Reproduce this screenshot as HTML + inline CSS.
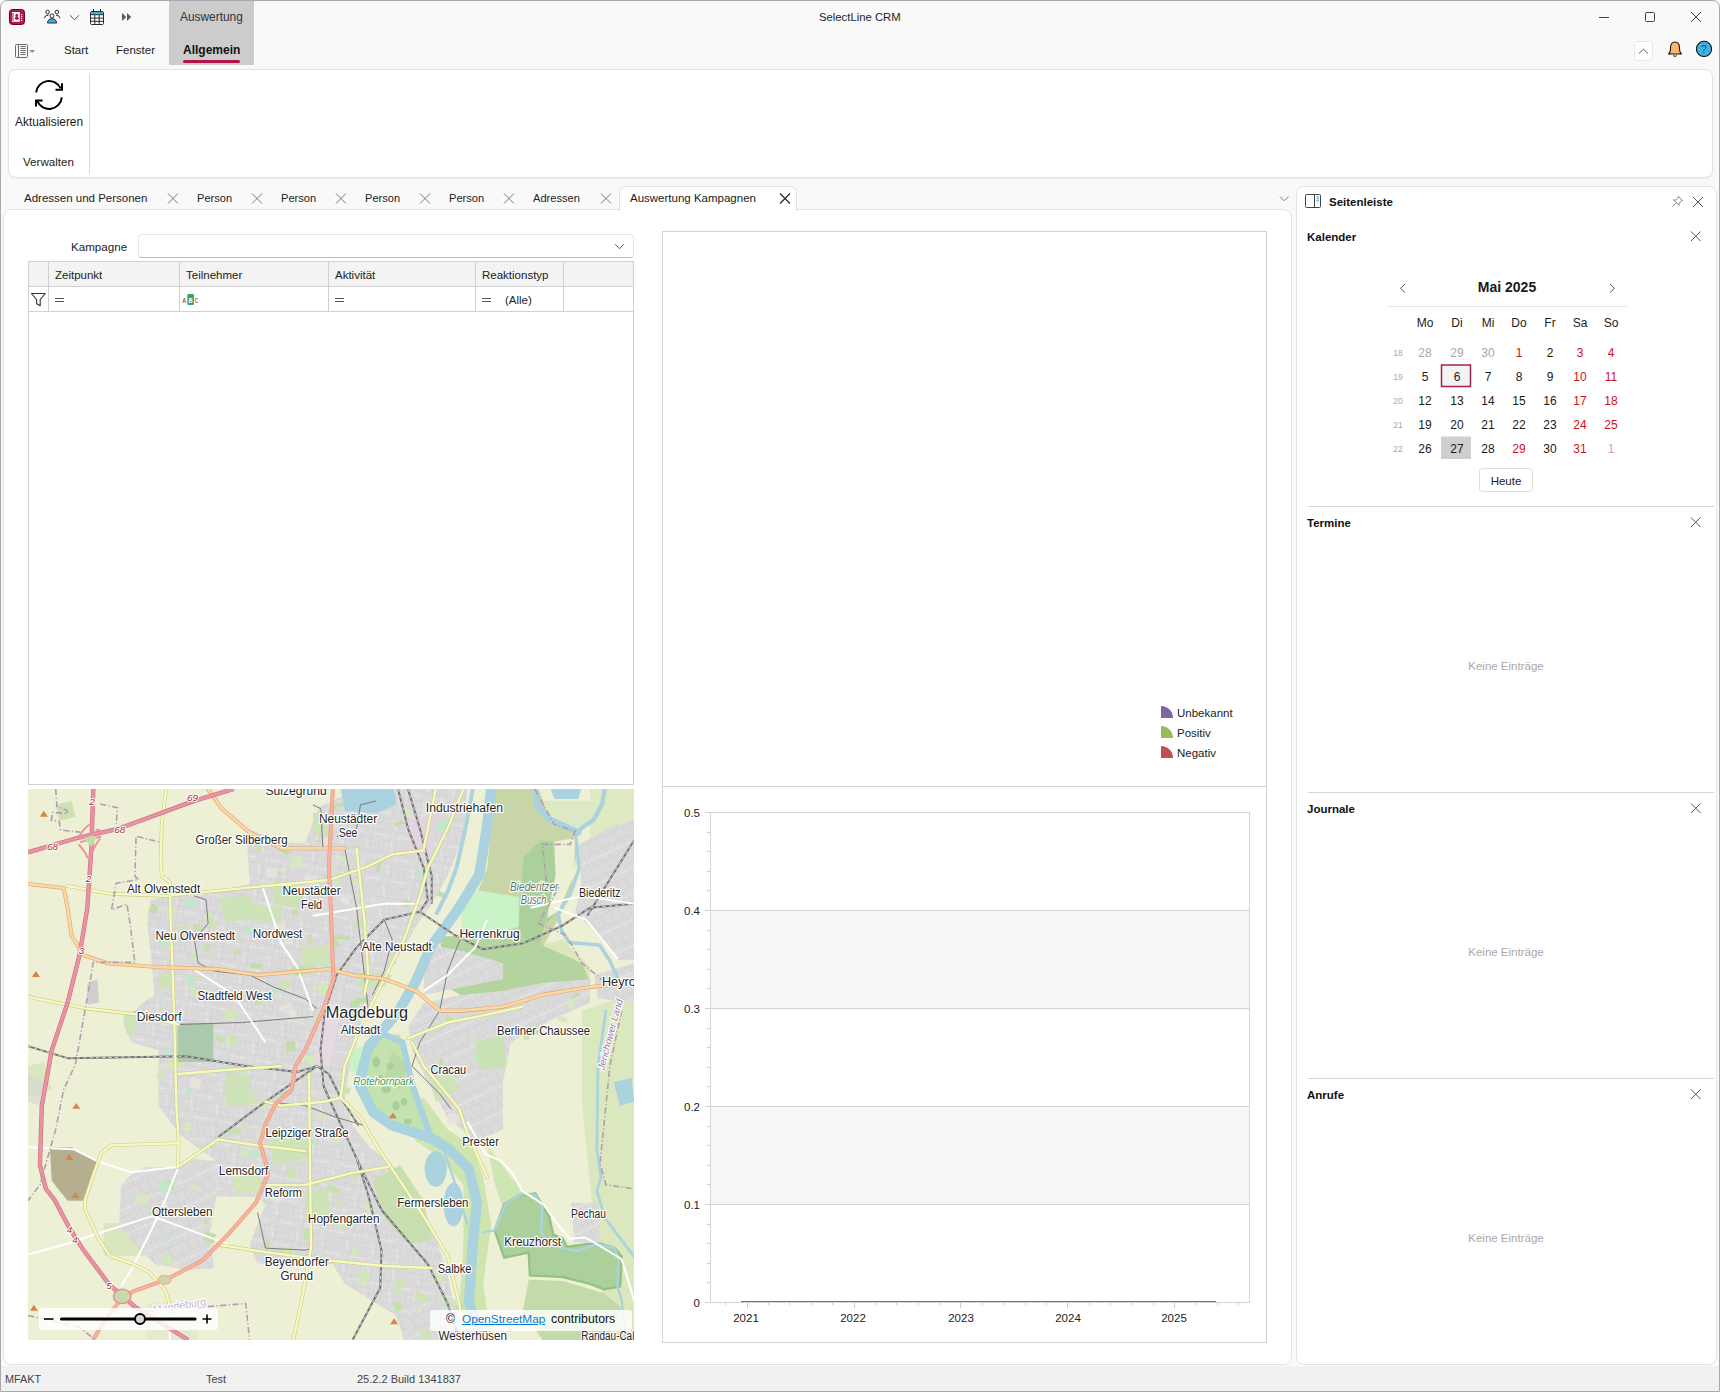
<!DOCTYPE html>
<html><head><meta charset="utf-8">
<style>
*{margin:0;padding:0;box-sizing:border-box}
html,body{width:1720px;height:1392px;overflow:hidden;background:#f9f9f9;font-family:"Liberation Sans",sans-serif;font-size:11.5px;color:#1a1a1a}
.a{position:absolute}
.t{position:absolute;white-space:nowrap;line-height:20px;height:20px}
.b{font-weight:bold}
svg{position:absolute;overflow:visible}
</style></head><body>
<!-- window border -->
<div class="a" style="left:0;top:0;width:1720px;height:1392px;border:1px solid #a9a9a9;border-radius:7px 7px 0 0"></div>

<!-- title bar -->
<div class="a" style="left:169px;top:1px;width:85px;height:64px;background:#cccccc"></div>
<div class="t" style="left:180px;top:7px;font-size:11.9px;color:#333">Auswertung</div>
<div class="t" style="left:819px;top:7px;font-size:11.3px;color:#1f1f1f">SelectLine CRM</div>


<!-- title icons -->
<svg width="1720" height="70" style="left:0;top:0">
 <rect x="9.5" y="9.5" width="15" height="15" rx="3" fill="#ad1a48" stroke="#72001a" stroke-width="1"/>
 <rect x="12" y="12" width="7.8" height="9.8" fill="#fff"/>
 <g fill="#ad1a48"><rect x="12" y="13.5" width="2" height="1"/><rect x="12" y="15.5" width="2" height="1"/><rect x="12" y="17.5" width="2" height="1"/><rect x="12" y="19.5" width="2" height="1"/>
 <ellipse cx="16.8" cy="15.4" rx="1.4" ry="1.6"/><ellipse cx="16.8" cy="18.3" rx="1.9" ry="1.7"/></g>
 <g fill="#fff"><rect x="21" y="14" width="1.2" height="1.2"/><rect x="21" y="16" width="1.2" height="1.2"/><rect x="21" y="18" width="1.2" height="1.2"/><rect x="21" y="20" width="1.2" height="1.2"/></g>
 <!-- people -->
 <g fill="none" stroke="#2b2b2b" stroke-width="1">
  <circle cx="47.6" cy="12.1" r="1.8"/><circle cx="56.9" cy="12.1" r="1.8"/><circle cx="52" cy="15.9" r="2"/>
  <path d="M44.3,18.2 Q45,15 48.5,15"/><path d="M60,18.2 Q59.3,15 56,15"/>
 </g>
 <path d="M47.5,23 Q47.8,18.8 52,18.8 Q56.3,18.8 56.6,23 Z" fill="#3cb3e6" stroke="#2b2b2b" stroke-width="1"/>
 <path d="M70,15.3 L74.5,19.7 L79,15.3" fill="none" stroke="#555" stroke-width="1"/>
 <!-- calendar -->
 <rect x="90.5" y="11.5" width="13" height="13" rx="1.2" fill="#fff" stroke="#2b2b2b" stroke-width="1"/>
 <rect x="91" y="12" width="12" height="2.6" fill="#3cb3e6"/>
 <path d="M90.5,14.7 H103.5 M90.5,18.1 H103.5 M90.5,21.3 H103.5 M94.8,14.7 V24.5 M99.2,14.7 V24.5 M93.5,9 V12.5 M100.5,9 V12.5" stroke="#2b2b2b" stroke-width="1" fill="none"/>
 <path d="M122,13 L126.2,17 L122,21 Z M127,13 L131.2,17 L127,21 Z" fill="#5a5a5a"/>
 <!-- window buttons -->
 <path d="M1599,17.5 H1609" stroke="#444" stroke-width="1"/>
 <rect x="1645.5" y="12.5" width="9" height="9" rx="1" fill="none" stroke="#444" stroke-width="1"/>
 <path d="M1691,12 L1701,22 M1701,12 L1691,22" stroke="#444" stroke-width="1"/>
 <!-- sidebar toggle -->
 <g stroke="#6b6b6b" stroke-width="1" fill="none"><rect x="15.5" y="44.5" width="12" height="13" rx="1"/><path d="M18.5,44.5 V57.5 M20.5,46.5 H25.7 M20.5,48.5 H25.7 M20.5,50.5 H25.7 M20.5,52.5 H25.7 M20.5,54.5 H25.7"/></g>
 <path d="M29.5,50 L35,50 L32.2,53 Z" fill="#8a8a8a"/>
 <!-- collapse / bell / help -->
 <rect x="1634.5" y="41.5" width="18" height="19" rx="2.5" fill="#fff" stroke="#e8e8e8"/>
 <path d="M1639,53.5 L1643.5,49.2 L1648,53.5" fill="none" stroke="#555" stroke-width="1"/>
 <path d="M1668.5,54 Q1670.5,52.5 1670.5,48 Q1670.5,42 1675,42 Q1679.5,42 1679.5,48 Q1679.5,52.5 1681.5,54 Z" fill="#fbb767" stroke="#111" stroke-width="1.1" stroke-linejoin="round"/>
 <path d="M1673.3,55.6 Q1675,57.2 1676.7,55.6" fill="none" stroke="#111" stroke-width="1"/>
 <circle cx="1704" cy="48.9" r="7.6" fill="#3cb3e2" stroke="#111" stroke-width="1.1"/>
 <text x="1704" y="52.8" font-size="10.5" text-anchor="middle" fill="#1a4a66" font-family="Liberation Sans">?</text>
</svg>


<!-- ribbon tabs -->
<div class="t" style="left:64px;top:40px;color:#222">Start</div>
<div class="t" style="left:116px;top:40px;color:#222">Fenster</div>
<div class="t b" style="left:183px;top:40px;font-size:12px;color:#111">Allgemein</div>
<div class="a" style="left:183px;top:60px;width:57px;height:3px;border-radius:2px;background:#b11548"></div>

<!-- ribbon panel -->
<div class="a" style="left:8px;top:69px;width:1705px;height:109px;background:#fff;border:1px solid #e4e4e4;border-radius:8px;box-shadow:0 1px 3px rgba(0,0,0,0.05)"></div>
<div class="a" style="left:89px;top:73px;width:1px;height:101px;background:#d9d9d9"></div>
<div class="t" style="left:15px;top:112px;font-size:11.9px;color:#222">Aktualisieren</div>
<div class="t" style="left:23px;top:152px;font-size:11.6px;color:#222">Verwalten</div>

<!-- refresh icon -->
<svg width="100" height="120" style="left:0;top:0">
 <g fill="none" stroke="#000" stroke-width="2" stroke-linecap="butt">
  <path d="M36.2,92.3 A12.8,12.8 0 0 1 60.5,88.3"/>
  <path d="M61.8,97.3 A12.8,12.8 0 0 1 37.3,101.2"/>
  <path d="M62,83.3 V89.8 H55.5" stroke-linejoin="miter"/>
  <path d="M36,106.5 V100.6 H42.6" stroke-linejoin="miter"/>
 </g>
</svg>
<!-- document tabs -->
<div class="t" style="left:24px;top:188px;color:#222;font-size:11.5px">Adressen und Personen</div>
<div class="t" style="left:197px;top:188px;color:#222;font-size:11.1px">Person</div>
<div class="t" style="left:281px;top:188px;color:#222;font-size:11.1px">Person</div>
<div class="t" style="left:365px;top:188px;color:#222;font-size:11.1px">Person</div>
<div class="t" style="left:449px;top:188px;color:#222;font-size:11.1px">Person</div>
<div class="t" style="left:533px;top:188px;color:#222;font-size:11.1px">Adressen</div>

<!-- content panel -->
<div class="a" style="left:3px;top:209px;width:1289px;height:1156px;background:#fff;border:1px solid #e3e3e3;border-radius:8px"></div>
<!-- active tab -->
<div class="a" style="left:619px;top:186px;width:178px;height:25px;background:#fff;border:1px solid #e3e3e3;border-bottom:none;border-radius:7px 7px 0 0"></div>
<div class="t" style="left:630px;top:188px;color:#1a1a1a;font-size:11.5px">Auswertung Kampagnen</div>


<!-- tab close icons + overflow chevron -->
<svg width="1300" height="220" style="left:0;top:0">
 <g stroke="#7a7a7a" stroke-width="1" fill="none">
  <path d="M168,193.5 L178,203.5 M178,193.5 L168,203.5"/>
  <path d="M252,193.5 L262,203.5 M262,193.5 L252,203.5"/>
  <path d="M336,193.5 L346,203.5 M346,193.5 L336,203.5"/>
  <path d="M420,193.5 L430,203.5 M430,193.5 L420,203.5"/>
  <path d="M504,193.5 L514,203.5 M514,193.5 L504,203.5"/>
  <path d="M601,193.5 L611,203.5 M611,193.5 L601,203.5"/>
  <path d="M1280,196.5 L1284.3,200.8 L1288.6,196.5"/>
 </g>
 <path d="M780,193.5 L790,203.5 M790,193.5 L780,203.5" stroke="#222" stroke-width="1.1" fill="none"/>
</svg>

<!-- Kampagne -->
<div class="t" style="left:71px;top:237px;font-size:11.6px;color:#222">Kampagne</div>
<div class="a" style="left:138px;top:234px;width:496px;height:24px;background:#fff;border:1px solid #e5e5e5;border-bottom-color:#bdbdbd;border-radius:4px"></div>
<svg width="20" height="20" style="left:0;top:0"><path d="M615,244.2 L619.5,248.7 L624,244.2" stroke="#555" fill="none" stroke-width="1"/></svg>

<!-- grid -->
<div class="a" style="left:28px;top:261px;width:606px;height:524px;border:1px solid #d0d0d0;background:#fff"></div>
<div class="a" style="left:29px;top:262px;width:604px;height:24px;background:#f3f3f3"></div>
<div class="a" style="left:29px;top:286px;width:604px;height:1px;background:#d0d0d0"></div>
<div class="a" style="left:29px;top:311px;width:604px;height:1px;background:#d0d0d0"></div>
<div class="a" style="left:48px;top:262px;width:1px;height:49px;background:#d0d0d0"></div>
<div class="a" style="left:179px;top:262px;width:1px;height:49px;background:#d0d0d0"></div>
<div class="a" style="left:328px;top:262px;width:1px;height:49px;background:#d0d0d0"></div>
<div class="a" style="left:475px;top:262px;width:1px;height:49px;background:#d0d0d0"></div>
<div class="a" style="left:563px;top:262px;width:1px;height:49px;background:#d0d0d0"></div>
<div class="t" style="left:55px;top:265px;color:#222">Zeitpunkt</div>
<div class="t" style="left:186px;top:265px;color:#222">Teilnehmer</div>
<div class="t" style="left:335px;top:265px;color:#222">Aktivität</div>
<div class="t" style="left:482px;top:265px;color:#222">Reaktionstyp</div>
<div class="t" style="left:505px;top:290px;color:#222">(Alle)</div>
<svg width="640" height="320" style="left:0;top:0">
 <path d="M31.5,293.5 H45.3 L40.2,299.5 V305.8 L36.6,303.8 V299.5 Z" fill="none" stroke="#333" stroke-width="1.1" stroke-linejoin="round"/>
 <g stroke="#555" stroke-width="1"><path d="M55,298.5 H64 M55,301.5 H64"/><path d="M335,298.5 H344 M335,301.5 H344"/><path d="M482,298.5 H491 M482,301.5 H491"/></g>
 <rect x="187.3" y="294" width="6.6" height="11" rx="1" fill="#3aa55a"/>
 <text x="182.5" y="303" font-size="7" font-family="Liberation Mono" fill="#333" textLength="3.4" lengthAdjust="spacingAndGlyphs">A</text>
 <text x="188.6" y="303" font-size="7" font-family="Liberation Mono" fill="#fff" font-weight="bold" textLength="4" lengthAdjust="spacingAndGlyphs">B</text>
 <text x="194.8" y="303" font-size="7" font-family="Liberation Mono" fill="#333" textLength="3.4" lengthAdjust="spacingAndGlyphs">C</text>
</svg>

<!-- chart box -->
<div class="a" style="left:662px;top:231px;width:605px;height:1112px;border:1px solid #d4d4d4;background:#fff"></div>
<div class="a" style="left:663px;top:786px;width:603px;height:1px;background:#d4d4d4"></div>
<svg width="1300" height="1400" style="left:0;top:0">
 <g>
  <path d="M1161,706 L1161,718 L1173,718 A12,12 0 0 0 1161,706 Z" fill="#8064a2"/>
  <path d="M1161,726 L1161,738 L1173,738 A12,12 0 0 0 1161,726 Z" fill="#9bbb59"/>
  <path d="M1161,746 L1161,758 L1173,758 A12,12 0 0 0 1161,746 Z" fill="#c0504d"/>
 </g>
 <!-- plot -->
 <rect x="710" y="910" width="539" height="98" fill="#f6f6f6"/>
 <rect x="710" y="1106" width="539" height="98" fill="#f6f6f6"/>
 <g stroke="#d4d4d4" stroke-width="1" fill="none">
  <rect x="710.5" y="812.5" width="539" height="490"/>
  <path d="M710,910.5 H1249 M710,1008.5 H1249 M710,1106.5 H1249 M710,1204.5 H1249"/>
  <path d="M705,812.5 H710 M705,910.5 H710 M705,1008.5 H710 M705,1106.5 H710 M705,1204.5 H710 M705,1302.5 H710"/>
 </g>
 <path d="M725.5,1302 V1305 M747.5,1302 V1308 M768.5,1302 V1305 M789.5,1302 V1305 M811.5,1302 V1305 M832.5,1302 V1305 M854.5,1302 V1308 M875.5,1302 V1305 M896.5,1302 V1305 M918.5,1302 V1305 M939.5,1302 V1305 M960.5,1302 V1308 M982.5,1302 V1305 M1003.5,1302 V1305 M1025.5,1302 V1305 M1046.5,1302 V1305 M1067.5,1302 V1308 M1089.5,1302 V1305 M1110.5,1302 V1305 M1132.5,1302 V1305 M1153.5,1302 V1305 M1174.5,1302 V1308 M1196.5,1302 V1305 M1217.5,1302 V1305 M1238.5,1302 V1305 M707,832.5 H710 M707,851.5 H710 M707,871.5 H710 M707,890.5 H710 M707,930.5 H710 M707,949.5 H710 M707,969.5 H710 M707,988.5 H710 M707,1028.5 H710 M707,1047.5 H710 M707,1067.5 H710 M707,1086.5 H710 M707,1126.5 H710 M707,1145.5 H710 M707,1165.5 H710 M707,1184.5 H710 M707,1224.5 H710 M707,1243.5 H710 M707,1263.5 H710 M707,1282.5 H710" stroke="#cfcfcf" stroke-width="1" fill="none"/>
 <path d="M741,1301.5 H1216" stroke="#c0504d" stroke-width="1.2"/>
</svg>
<div class="t" style="left:1177px;top:703px;color:#222;font-size:11.5px">Unbekannt</div>
<div class="t" style="left:1177px;top:723px;color:#222;font-size:11.5px">Positiv</div>
<div class="t" style="left:1177px;top:743px;color:#222;font-size:11.5px">Negativ</div>
<div class="t" style="left:664px;top:803px;width:36px;text-align:right;color:#222">0.5</div>
<div class="t" style="left:664px;top:901px;width:36px;text-align:right;color:#222">0.4</div>
<div class="t" style="left:664px;top:999px;width:36px;text-align:right;color:#222">0.3</div>
<div class="t" style="left:664px;top:1097px;width:36px;text-align:right;color:#222">0.2</div>
<div class="t" style="left:664px;top:1195px;width:36px;text-align:right;color:#222">0.1</div>
<div class="t" style="left:664px;top:1293px;width:36px;text-align:right;color:#222">0</div>
<div class="t" style="left:716px;top:1308px;width:60px;text-align:center;color:#222">2021</div>
<div class="t" style="left:823px;top:1308px;width:60px;text-align:center;color:#222">2022</div>
<div class="t" style="left:931px;top:1308px;width:60px;text-align:center;color:#222">2023</div>
<div class="t" style="left:1038px;top:1308px;width:60px;text-align:center;color:#222">2024</div>
<div class="t" style="left:1144px;top:1308px;width:60px;text-align:center;color:#222">2025</div>

<!-- MAP -->
<div class="a" id="map" style="left:28px;top:789px;width:606px;height:551px;overflow:hidden">
<svg style="left:0;top:0" width="606" height="551" viewBox="0 0 606 551">
<defs>
<pattern id="urb" width="64" height="56" patternUnits="userSpaceOnUse" patternTransform="rotate(10)">
 <rect width="64" height="56" fill="#dcdbdb"/>
 <path d="M0,1 H64 M1,0 V56 M22,1 V28 M44,0 V56 M1,28 H44 M22,42 H64 M12,28 V56 M56,1 V42" stroke="#cbcaca" stroke-width="1.2" fill="none"/>
 <path d="M0,14 H22 M44,14 H64 M30,28 L38,56" stroke="#ececec" stroke-width="2" fill="none"/>
</pattern>
<pattern id="urb2" width="48" height="60" patternUnits="userSpaceOnUse" patternTransform="rotate(-25)">
 <rect width="48" height="60" fill="#dcdbdb"/>
 <path d="M0,1 H48 M1,0 V60 M24,0 V30 M0,30 H48 M12,30 V60 M36,30 V60" stroke="#cbcaca" stroke-width="1.2" fill="none"/>
 <path d="M0,45 H48" stroke="#ececec" stroke-width="2"/>
</pattern>
</defs>
<g transform="scale(0.395819)">
<rect x="0" y="0" width="1531" height="1392" fill="#eef0d5"/>
<path d="M1400,560 L1460,540 L1531,520 L1531,1392 L1470,1392 L1440,1200 L1420,1000 L1400,800 Z" fill="#dbe8bd"/>
<path d="M1420,0 L1531,0 L1531,100 L1420,200 Z" fill="#dfe9c2"/>
<path d="M1200,420 L1350,380 L1420,450 L1420,500 L1200,520 Z" fill="#dbe6bc"/>
<path d="M1000,780 L1060,860 L1120,900 L1150,980 L1170,1100 L1150,1250 L1170,1392 L1100,1392 L1090,1300 L1100,1150 L1100,1000 L1040,930 L980,890 L950,810 Z" fill="#cfe5b0"/>
<path d="M1160,900 L1220,980 L1260,1020 L1200,1060 L1180,1000 Z" fill="#cfe5b2"/>
<path d="M191,1097 L294,1097 L294,1179 L191,1179 Z" fill="#d7e6bd"/>
<path d="M0,700 L40,690 L60,760 L0,780 Z" fill="#d9e6bf"/>
<path d="M70,40 L110,30 L120,70 L80,80 Z" fill="#cfe0b5"/>
<path d="M300,1300 L420,1290 L430,1392 L300,1392 Z" fill="#e4ebcc"/>
<path d="M1181,0 L1290,0 L1320,80 L1382,106 L1390,140 L1370,260 L1340,330 L1300,400 L1200,420 L1080,400 L1120,300 L1160,200 Z" fill="#c8d6a7"/>
<path d="M1252,174 L1295,130 L1345,133 L1351,161 L1339,310 L1305,341 L1283,432 L1240,432 L1240,341 Z" fill="#acd09c"/>
<path d="M1041,372 L1243,372 L1300,395 L1400,440 L1420,490 L1300,515 L1200,535 L1100,525 L1050,495 Z" fill="#b3d39f"/>
<path d="M1179,1115 L1203,1050 L1241,1026 L1282,1022 L1303,1057 L1317,1081 L1327,1126 L1351,1136 L1362,1157 L1386,1153 L1438,1146 L1482,1160 L1500,1181 L1496,1257 L1455,1264 L1420,1250 L1351,1233 L1268,1229 L1265,1171 L1203,1184 Z" fill="#acd09c" stroke="#93c283" stroke-width="6"/>
<path d="M1265,1240 L1351,1243 L1455,1274 L1500,1310 L1460,1392 L1300,1392 L1250,1320 Z" fill="#c2dba8"/>
<path d="M1329,133 L1382,124 L1379,217 L1339,310 L1311,326 L1333,217 Z" fill="#eef0d5"/>
<path d="M1300,30 L1430,30 L1420,80 L1390,105 L1330,90 Z" fill="#dde9c4"/>
<path d="M551,100 L650,135 L700,135 L735,45 L790,20 L850,5 L940,0 L1110,0 L1100,120 L1060,220 L1020,290 L985,340 L950,400 L920,450 L880,520 L850,580 L830,640 L810,720 L800,790 L820,850 L860,900 L930,960 L990,1040 L1030,1130 L1060,1230 L1080,1320 L1090,1392 L950,1392 L930,1330 L880,1300 L800,1250 L770,1200 L640,1205 L580,1200 L560,1150 L600,1050 L580,1030 L476,1030 L476,940 L420,900 L380,870 L330,800 L330,660 L260,640 L240,590 L290,540 L320,520 L310,420 L300,330 L310,280 L360,270 L430,270 L560,240 Z" fill="url(#urb)"/>
<path d="M300,955 L376,955 L420,935 L476,940 L476,1030 L460,1120 L470,1211 L400,1215 L320,1200 L260,1140 L230,1100 L235,1000 L260,975 Z" fill="url(#urb2)"/>
<path d="M1000,540 L1100,520 L1200,510 L1300,490 L1420,480 L1420,540 L1330,580 L1220,640 L1200,740 L1200,860 L1130,890 L1060,830 L1010,740 L970,660 L960,600 Z" fill="url(#urb2)"/>
<path d="M1392,140 L1475,93 L1531,78 L1531,432 L1491,432 L1413,341 L1382,310 L1398,248 Z" fill="url(#urb2)"/>
<path d="M1372,1045 L1440,1045 L1445,1146 L1380,1146 Z" fill="url(#urb2)"/>
<path d="M960,1300 L1080,1290 L1100,1392 L960,1392 Z" fill="url(#urb2)"/>
<path d="M1430,470 L1531,440 L1531,540 L1440,530 Z" fill="url(#urb2)"/>
<path d="M1000,390 L1100,410 L1200,440 L1200,480 L1100,500 L1000,520 Z" fill="url(#urb2)"/>
<rect x="615" y="210" width="26" height="9" fill="#c8e0ae" transform="rotate(2 615 210)"/>
<rect x="924" y="1266" width="15" height="10" fill="#d3e6bc" transform="rotate(-5 924 1266)"/>
<rect x="338" y="591" width="30" height="10" fill="#e6e2dc" transform="rotate(-17 338 591)"/>
<rect x="924" y="86" width="24" height="9" fill="#c2ddaa" transform="rotate(-17 924 86)"/>
<rect x="597" y="1136" width="14" height="20" fill="#c8e0ae" transform="rotate(8 597 1136)"/>
<rect x="346" y="991" width="24" height="20" fill="#c2ddaa" transform="rotate(-0 346 991)"/>
<rect x="739" y="437" width="24" height="17" fill="#bfe8c8" transform="rotate(-12 739 437)"/>
<rect x="444" y="1086" width="12" height="14" fill="#c8e0ae" transform="rotate(-0 444 1086)"/>
<rect x="728" y="1054" width="14" height="18" fill="#e6e2dc" transform="rotate(-28 728 1054)"/>
<rect x="635" y="487" width="22" height="24" fill="#cfe4b6" transform="rotate(-26 635 487)"/>
<rect x="1020" y="84" width="27" height="21" fill="#bfe8c8" transform="rotate(30 1020 84)"/>
<rect x="760" y="998" width="31" height="15" fill="#c8e0ae" transform="rotate(26 760 998)"/>
<rect x="300" y="1069" width="13" height="13" fill="#bfe8c8" transform="rotate(-7 300 1069)"/>
<rect x="821" y="232" width="20" height="14" fill="#d6e8c0" transform="rotate(-22 821 232)"/>
<rect x="724" y="499" width="31" height="27" fill="#d3e6bc" transform="rotate(-21 724 499)"/>
<rect x="447" y="392" width="13" height="19" fill="#c8e0ae" transform="rotate(7 447 392)"/>
<rect x="1035" y="75" width="32" height="24" fill="#bfe8c8" transform="rotate(22 1035 75)"/>
<rect x="699" y="670" width="20" height="12" fill="#d6e8c0" transform="rotate(29 699 670)"/>
<rect x="423" y="473" width="11" height="8" fill="#cfe4b6" transform="rotate(-21 423 473)"/>
<rect x="314" y="289" width="19" height="21" fill="#c2ddaa" transform="rotate(27 314 289)"/>
<rect x="663" y="171" width="30" height="28" fill="#d6e8c0" transform="rotate(-2 663 171)"/>
<rect x="601" y="201" width="28" height="23" fill="#e6e2dc" transform="rotate(-1 601 201)"/>
<rect x="404" y="756" width="11" height="19" fill="#bfe8c8" transform="rotate(29 404 756)"/>
<rect x="338" y="1177" width="22" height="26" fill="#d3e6bc" transform="rotate(-9 338 1177)"/>
<rect x="864" y="1084" width="18" height="12" fill="#bfe8c8" transform="rotate(19 864 1084)"/>
<rect x="500" y="721" width="19" height="9" fill="#c8e0ae" transform="rotate(-28 500 721)"/>
<rect x="792" y="270" width="25" height="15" fill="#e6e2dc" transform="rotate(19 792 270)"/>
<rect x="664" y="307" width="15" height="12" fill="#c2ddaa" transform="rotate(-18 664 307)"/>
<rect x="639" y="895" width="30" height="10" fill="#e6e2dc" transform="rotate(-7 639 895)"/>
<rect x="1123" y="665" width="14" height="24" fill="#bfe8c8" transform="rotate(-10 1123 665)"/>
<rect x="781" y="1035" width="12" height="11" fill="#cfe4b6" transform="rotate(30 781 1035)"/>
<rect x="883" y="182" width="10" height="27" fill="#c2ddaa" transform="rotate(9 883 182)"/>
<rect x="483" y="698" width="28" height="15" fill="#bfe8c8" transform="rotate(3 483 698)"/>
<rect x="651" y="638" width="24" height="26" fill="#c2ddaa" transform="rotate(-5 651 638)"/>
<rect x="838" y="1215" width="29" height="20" fill="#d3e6bc" transform="rotate(17 838 1215)"/>
<rect x="435" y="659" width="27" height="19" fill="#c2ddaa" transform="rotate(-10 435 659)"/>
<rect x="768" y="39" width="31" height="9" fill="#c2ddaa" transform="rotate(-10 768 39)"/>
<rect x="951" y="278" width="17" height="18" fill="#c2ddaa" transform="rotate(18 951 278)"/>
<rect x="539" y="779" width="33" height="25" fill="#cfe4b6" transform="rotate(-22 539 779)"/>
<rect x="697" y="440" width="26" height="17" fill="#c8e0ae" transform="rotate(-17 697 440)"/>
<rect x="414" y="997" width="26" height="11" fill="#d6e8c0" transform="rotate(23 414 997)"/>
<rect x="704" y="678" width="34" height="25" fill="#d6e8c0" transform="rotate(-20 704 678)"/>
<rect x="731" y="496" width="12" height="15" fill="#d6e8c0" transform="rotate(-10 731 496)"/>
<rect x="624" y="869" width="22" height="9" fill="#bfe8c8" transform="rotate(29 624 869)"/>
<rect x="330" y="379" width="32" height="12" fill="#bfe8c8" transform="rotate(15 330 379)"/>
<rect x="909" y="975" width="12" height="9" fill="#d6e8c0" transform="rotate(11 909 975)"/>
<rect x="540" y="847" width="15" height="13" fill="#cfe4b6" transform="rotate(-23 540 847)"/>
<rect x="634" y="770" width="32" height="13" fill="#c2ddaa" transform="rotate(-22 634 770)"/>
<rect x="1074" y="1306" width="33" height="13" fill="#c8e0ae" transform="rotate(-19 1074 1306)"/>
<rect x="475" y="620" width="26" height="13" fill="#c8e0ae" transform="rotate(18 475 620)"/>
<rect x="842" y="342" width="21" height="21" fill="#e6e2dc" transform="rotate(9 842 342)"/>
<rect x="819" y="1162" width="19" height="18" fill="#d3e6bc" transform="rotate(11 819 1162)"/>
<rect x="638" y="1159" width="27" height="21" fill="#c8e0ae" transform="rotate(-6 638 1159)"/>
<rect x="1277" y="600" width="11" height="21" fill="#c2ddaa" transform="rotate(-7 1277 600)"/>
<rect x="518" y="408" width="21" height="11" fill="#c8e0ae" transform="rotate(-3 518 408)"/>
<rect x="663" y="458" width="34" height="14" fill="#c8e0ae" transform="rotate(-28 663 458)"/>
<rect x="562" y="913" width="16" height="24" fill="#bfe8c8" transform="rotate(-25 562 913)"/>
<rect x="337" y="556" width="11" height="8" fill="#d3e6bc" transform="rotate(-12 337 556)"/>
<rect x="940" y="1064" width="27" height="18" fill="#c2ddaa" transform="rotate(-13 940 1064)"/>
<rect x="995" y="61" width="30" height="26" fill="#e6e2dc" transform="rotate(8 995 61)"/>
<rect x="1064" y="704" width="32" height="23" fill="#bfe8c8" transform="rotate(4 1064 704)"/>
<rect x="925" y="1243" width="26" height="22" fill="#cfe4b6" transform="rotate(-16 925 1243)"/>
<rect x="1372" y="524" width="21" height="9" fill="#c2ddaa" transform="rotate(-29 1372 524)"/>
<rect x="1040" y="681" width="10" height="24" fill="#c2ddaa" transform="rotate(15 1040 681)"/>
<rect x="856" y="1038" width="21" height="24" fill="#d3e6bc" transform="rotate(21 856 1038)"/>
<rect x="818" y="533" width="21" height="22" fill="#c2ddaa" transform="rotate(16 818 533)"/>
<rect x="983" y="276" width="24" height="15" fill="#e6e2dc" transform="rotate(9 983 276)"/>
<rect x="592" y="790" width="10" height="9" fill="#e6e2dc" transform="rotate(-14 592 790)"/>
<rect x="348" y="303" width="22" height="22" fill="#d6e8c0" transform="rotate(-13 348 303)"/>
<rect x="785" y="165" width="31" height="12" fill="#d6e8c0" transform="rotate(29 785 165)"/>
<rect x="765" y="374" width="15" height="27" fill="#c2ddaa" transform="rotate(-17 765 374)"/>
<rect x="337" y="1041" width="16" height="15" fill="#e6e2dc" transform="rotate(6 337 1041)"/>
<rect x="835" y="1235" width="27" height="13" fill="#d6e8c0" transform="rotate(24 835 1235)"/>
<rect x="699" y="221" width="33" height="22" fill="#e6e2dc" transform="rotate(-6 699 221)"/>
<rect x="397" y="479" width="18" height="25" fill="#bfe8c8" transform="rotate(-30 397 479)"/>
<rect x="633" y="554" width="33" height="12" fill="#e6e2dc" transform="rotate(-29 633 554)"/>
<rect x="575" y="518" width="19" height="28" fill="#c8e0ae" transform="rotate(5 575 518)"/>
<rect x="986" y="207" width="33" height="17" fill="#bfe8c8" transform="rotate(-11 986 207)"/>
<rect x="981" y="1271" width="33" height="19" fill="#cfe4b6" transform="rotate(13 981 1271)"/>
<rect x="1341" y="572" width="25" height="11" fill="#d6e8c0" transform="rotate(22 1341 572)"/>
<rect x="382" y="657" width="18" height="14" fill="#e6e2dc" transform="rotate(14 382 657)"/>
<rect x="540" y="913" width="17" height="19" fill="#d3e6bc" transform="rotate(-6 540 913)"/>
<rect x="995" y="105" width="22" height="24" fill="#d6e8c0" transform="rotate(3 995 105)"/>
<rect x="765" y="194" width="15" height="10" fill="#cfe4b6" transform="rotate(-9 765 194)"/>
<rect x="610" y="513" width="29" height="12" fill="#bfe8c8" transform="rotate(-29 610 513)"/>
<rect x="721" y="576" width="23" height="16" fill="#cfe4b6" transform="rotate(-10 721 576)"/>
<rect x="659" y="956" width="23" height="24" fill="#cfe4b6" transform="rotate(21 659 956)"/>
<rect x="553" y="346" width="20" height="17" fill="#bfe8c8" transform="rotate(27 553 346)"/>
<rect x="381" y="592" width="28" height="24" fill="#d6e8c0" transform="rotate(28 381 592)"/>
<rect x="414" y="727" width="26" height="27" fill="#e6e2dc" transform="rotate(13 414 727)"/>
<rect x="331" y="1081" width="10" height="11" fill="#cfe4b6" transform="rotate(4 331 1081)"/>
<rect x="382" y="350" width="25" height="22" fill="#cfe4b6" transform="rotate(-23 382 350)"/>
<rect x="458" y="363" width="29" height="8" fill="#d6e8c0" transform="rotate(2 458 363)"/>
<rect x="562" y="440" width="30" height="13" fill="#c2ddaa" transform="rotate(2 562 440)"/>
<rect x="1033" y="585" width="16" height="21" fill="#d3e6bc" transform="rotate(26 1033 585)"/>
<rect x="817" y="969" width="27" height="15" fill="#cfe4b6" transform="rotate(-6 817 969)"/>
<rect x="831" y="286" width="33" height="14" fill="#d3e6bc" transform="rotate(19 831 286)"/>
<rect x="783" y="369" width="31" height="10" fill="#c2ddaa" transform="rotate(7 783 369)"/>
<rect x="453" y="311" width="20" height="21" fill="#d3e6bc" transform="rotate(27 453 311)"/>
<rect x="724" y="988" width="14" height="17" fill="#c8e0ae" transform="rotate(13 724 988)"/>
<rect x="675" y="462" width="14" height="8" fill="#c8e0ae" transform="rotate(-13 675 462)"/>
<rect x="898" y="1056" width="19" height="23" fill="#bfe8c8" transform="rotate(-11 898 1056)"/>
<rect x="745" y="69" width="21" height="15" fill="#d3e6bc" transform="rotate(25 745 69)"/>
<rect x="615" y="1026" width="21" height="21" fill="#e6e2dc" transform="rotate(-15 615 1026)"/>
<rect x="633" y="379" width="33" height="20" fill="#e6e2dc" transform="rotate(-14 633 379)"/>
<rect x="1051" y="1287" width="17" height="22" fill="#bfe8c8" transform="rotate(6 1051 1287)"/>
<rect x="984" y="1313" width="11" height="13" fill="#d6e8c0" transform="rotate(-1 984 1313)"/>
<rect x="1365" y="538" width="16" height="17" fill="#d6e8c0" transform="rotate(-0 1365 538)"/>
<rect x="448" y="1117" width="28" height="24" fill="#c2ddaa" transform="rotate(16 448 1117)"/>
<rect x="778" y="1091" width="24" height="18" fill="#d3e6bc" transform="rotate(-6 778 1091)"/>
<rect x="345" y="694" width="27" height="17" fill="#d6e8c0" transform="rotate(-16 345 694)"/>
<rect x="510" y="750" width="29" height="23" fill="#c8e0ae" transform="rotate(17 510 750)"/>
<rect x="580" y="789" width="19" height="23" fill="#d3e6bc" transform="rotate(-18 580 789)"/>
<rect x="451" y="328" width="17" height="26" fill="#cfe4b6" transform="rotate(-19 451 328)"/>
<rect x="834" y="322" width="29" height="21" fill="#cfe4b6" transform="rotate(29 834 322)"/>
<rect x="505" y="624" width="19" height="26" fill="#cfe4b6" transform="rotate(-16 505 624)"/>
<rect x="924" y="1295" width="19" height="25" fill="#c8e0ae" transform="rotate(-3 924 1295)"/>
<rect x="276" y="1019" width="32" height="24" fill="#d6e8c0" transform="rotate(19 276 1019)"/>
<rect x="1037" y="258" width="17" height="12" fill="#c2ddaa" transform="rotate(18 1037 258)"/>
<rect x="805" y="568" width="29" height="21" fill="#c2ddaa" transform="rotate(-21 805 568)"/>
<rect x="1058" y="570" width="17" height="14" fill="#c8e0ae" transform="rotate(27 1058 570)"/>
<rect x="747" y="218" width="13" height="10" fill="#c8e0ae" transform="rotate(5 747 218)"/>
<rect x="778" y="226" width="10" height="19" fill="#d6e8c0" transform="rotate(8 778 226)"/>
<rect x="671" y="702" width="14" height="14" fill="#cfe4b6" transform="rotate(1 671 702)"/>
<rect x="359" y="683" width="29" height="27" fill="#d3e6bc" transform="rotate(-18 359 683)"/>
<rect x="333" y="992" width="27" height="26" fill="#bfe8c8" transform="rotate(8 333 992)"/>
<rect x="494" y="563" width="30" height="25" fill="#d3e6bc" transform="rotate(-19 494 563)"/>
<rect x="416" y="500" width="14" height="27" fill="#d3e6bc" transform="rotate(19 416 500)"/>
<rect x="730" y="811" width="20" height="21" fill="#d6e8c0" transform="rotate(-3 730 811)"/>
<rect x="762" y="861" width="30" height="25" fill="#d6e8c0" transform="rotate(19 762 861)"/>
<rect x="742" y="128" width="21" height="18" fill="#e6e2dc" transform="rotate(-28 742 128)"/>
<rect x="603" y="1003" width="12" height="23" fill="#e6e2dc" transform="rotate(24 603 1003)"/>
<rect x="478" y="366" width="22" height="14" fill="#d3e6bc" transform="rotate(-28 478 366)"/>
<rect x="710" y="886" width="17" height="15" fill="#bfe8c8" transform="rotate(-7 710 886)"/>
<rect x="699" y="1110" width="16" height="28" fill="#c8e0ae" transform="rotate(5 699 1110)"/>
<rect x="504" y="857" width="33" height="14" fill="#c8e0ae" transform="rotate(1 504 857)"/>
<rect x="991" y="1370" width="24" height="21" fill="#cfe4b6" transform="rotate(-11 991 1370)"/>
<rect x="576" y="871" width="20" height="15" fill="#d6e8c0" transform="rotate(-27 576 871)"/>
<rect x="500" y="909" width="11" height="8" fill="#cfe4b6" transform="rotate(-9 500 909)"/>
<rect x="722" y="419" width="13" height="15" fill="#d3e6bc" transform="rotate(20 722 419)"/>
<rect x="708" y="368" width="10" height="21" fill="#c8e0ae" transform="rotate(4 708 368)"/>
<rect x="816" y="230" width="10" height="9" fill="#d3e6bc" transform="rotate(-28 816 230)"/>
<rect x="399" y="278" width="25" height="18" fill="#bfe8c8" transform="rotate(8 399 278)"/>
<rect x="799" y="749" width="19" height="17" fill="#cfe4b6" transform="rotate(25 799 749)"/>
<rect x="1113" y="630" width="15" height="10" fill="#cfe4b6" transform="rotate(-16 1113 630)"/>
<rect x="1046" y="1277" width="33" height="14" fill="#d3e6bc" transform="rotate(26 1046 1277)"/>
<rect x="332" y="706" width="14" height="26" fill="#d3e6bc" transform="rotate(21 332 706)"/>
<rect x="621" y="333" width="32" height="21" fill="#e6e2dc" transform="rotate(12 621 333)"/>
<rect x="792" y="739" width="10" height="9" fill="#d3e6bc" transform="rotate(27 792 739)"/>
<rect x="909" y="428" width="15" height="20" fill="#d3e6bc" transform="rotate(-25 909 428)"/>
<rect x="640" y="197" width="11" height="9" fill="#e6e2dc" transform="rotate(12 640 197)"/>
<rect x="1020" y="1225" width="28" height="22" fill="#d3e6bc" transform="rotate(-7 1020 1225)"/>
<rect x="572" y="139" width="12" height="23" fill="#c8e0ae" transform="rotate(-18 572 139)"/>
<rect x="630" y="364" width="18" height="27" fill="#bfe8c8" transform="rotate(-27 630 364)"/>
<rect x="668" y="447" width="33" height="18" fill="#c2ddaa" transform="rotate(21 668 447)"/>
<rect x="347" y="653" width="11" height="19" fill="#bfe8c8" transform="rotate(13 347 653)"/>
<rect x="338" y="1141" width="14" height="8" fill="#bfe8c8" transform="rotate(-18 338 1141)"/>
<rect x="644" y="133" width="27" height="25" fill="#c2ddaa" transform="rotate(28 644 133)"/>
<rect x="643" y="1158" width="16" height="27" fill="#d3e6bc" transform="rotate(-13 643 1158)"/>
<rect x="1143" y="682" width="34" height="19" fill="#c8e0ae" transform="rotate(-24 1143 682)"/>
<rect x="653" y="559" width="19" height="26" fill="#e6e2dc" transform="rotate(-25 653 559)"/>
<rect x="826" y="528" width="31" height="13" fill="#c2ddaa" transform="rotate(-2 826 528)"/>
<rect x="950" y="47" width="24" height="18" fill="#d6e8c0" transform="rotate(22 950 47)"/>
<rect x="432" y="611" width="29" height="20" fill="#d6e8c0" transform="rotate(-22 432 611)"/>
<rect x="834" y="372" width="28" height="25" fill="#e6e2dc" transform="rotate(7 834 372)"/>
<rect x="416" y="345" width="18" height="18" fill="#c8e0ae" transform="rotate(-20 416 345)"/>
<rect x="406" y="421" width="17" height="13" fill="#cfe4b6" transform="rotate(-23 406 421)"/>
<rect x="1247" y="608" width="15" height="28" fill="#cfe4b6" transform="rotate(-12 1247 608)"/>
<rect x="399" y="840" width="20" height="23" fill="#d6e8c0" transform="rotate(24 399 840)"/>
<rect x="1064" y="818" width="26" height="25" fill="#e6e2dc" transform="rotate(10 1064 818)"/>
<path d="M55,905 L110,905 L175,940 L140,1040 L100,1040 L60,990 Z" fill="#b6af8f"/>
<path d="M870,620 L940,620 L965,740 L990,820 L1010,870 L930,850 L880,820 L845,750 Z" fill="#c4e2ae"/>
<path d="M1131,255 L1240,273 L1240,348 L1097,385 L1094,310 Z" fill="#c9f3c6"/>
<path d="M620,230 L700,250 L690,300 L620,290 Z" fill="#cde2b4"/>
<path d="M480,275 L560,270 L570,330 L500,335 Z" fill="#cfe3b8"/>
<path d="M500,720 L560,720 L560,800 L500,800 Z" fill="#cfe3b8"/>
<path d="M560,290 L640,300 L640,340 L560,330 Z" fill="#cfe3b8"/>
<path d="M690,400 L760,395 L760,440 L690,445 Z" fill="#d0e4b9"/>
<path d="M840,460 L920,470 L900,500 L830,500 Z" fill="#cfe3b8"/>
<path d="M330,470 L360,460 L360,500 L330,510 Z" fill="#cfe3b8"/>
<path d="M610,880 L700,860 L720,930 L620,950 Z" fill="#cfe3b8"/>
<path d="M520,960 L590,960 L590,1020 L520,1020 Z" fill="#d2e5bb"/>
<path d="M700,1020 L760,1010 L760,1080 L700,1090 Z" fill="#cfe3b8"/>
<path d="M920,660 L960,700 L940,760 L900,730 Z" fill="#b9d9a5"/>
<path d="M870,990 L940,950 L1000,1040 L1020,1140 L960,1150 L900,1080 Z" fill="#c9dfb0"/>
<path d="M1010,720 L1060,700 L1090,760 L1030,790 Z" fill="#cfe3b8"/>
<path d="M1130,640 L1200,620 L1210,700 L1140,710 Z" fill="#c9e2b3"/>
<path d="M720,60 L760,60 L760,120 L720,120 Z" fill="#cfe3b8"/>
<path d="M960,80 L1040,60 L1020,160 L960,170 Z" fill="#e3d5df"/>
<path d="M240,570 L270,560 L270,620 L250,620 Z" fill="#cfe3b8"/>
<path d="M378,592 L468,592 L468,690 L378,690 Z" fill="#abc9ad"/>
<ellipse cx="880" cy="690" rx="10" ry="14" fill="#a9cf98"/>
<ellipse cx="905" cy="760" rx="12" ry="9" fill="#a9cf98"/>
<ellipse cx="930" cy="800" rx="9" ry="12" fill="#a9cf98"/>
<ellipse cx="890" cy="730" rx="7" ry="7" fill="#a9cf98"/>
<ellipse cx="950" cy="790" rx="8" ry="10" fill="#a9cf98"/>
<ellipse cx="915" cy="700" rx="9" ry="8" fill="#a9cf98"/>
<ellipse cx="960" cy="840" rx="10" ry="7" fill="#a9cf98"/>
<path d="M810,660 L850,650 L845,720 L815,715 Z" fill="#c9f3c6"/>
<path d="M150,490 L175,480 L180,540 L150,545 Z" fill="#cfcfcf"/>
<path d="M0,720 L40,740 L30,800 L0,790 Z" fill="#d6d6d6" opacity="0.6"/>
<path d="M745,540 L790,540 L780,620 L765,700 L725,700 L735,610 Z" fill="#e6d9e2"/>
<g fill="none" stroke="#aad3df" stroke-linecap="round" stroke-linejoin="round">
<path d="M1170,0 L1160,93 L1140,217 L1090,298 L1055,348 L1018,398 L978,490 L935,563 L890,616 L861,650 L836,745 L872,816 L920,850 L1013,880 L1063,909 L1114,960 L1134,1046 L1124,1144 L1114,1296 L1144,1392" stroke-width="26"/>
<path d="M890,616 L946,640 L970,745 L995,816 L1016,874" stroke-width="16"/>
<path d="M1124,0 L1105,100 L1083,198 L1060,260 L1033,313" stroke-width="10"/>
<path d="M1280,0 L1289,47 L1320,78 L1367,99 L1390,110" stroke-width="16"/>
<path d="M1457,0 L1451,37 L1429,78 L1398,99 L1385,115" stroke-width="11"/>
<path d="M1385,124 L1392,202 L1370,264 L1339,317 L1348,357 L1367,388 L1444,394 L1469,432 L1500,500" stroke-width="9"/>
<path d="M1040,880 L1080,1000 L1110,1100" stroke-width="6"/>
<path d="M1150,1120 L1179,1115 L1206,1050 L1248,1022 L1282,1026 L1300,1057 L1296,1119 L1317,1153 L1386,1167 L1438,1150 L1482,1160 L1493,1188 L1489,1257 L1500,1291 L1510,1392" stroke-width="6"/>
<path d="M1460,560 L1440,700 L1437,912 L1448,981 L1437,1015 L1458,1084 L1489,1126 L1531,1181" stroke-width="7" stroke="#aad3df"/>
</g>
<g fill="#aad3df">
<path d="M790,0 L925,0 L930,40 L880,62 L800,55 Z"/>
<path d="M1320,0 L1398,0 L1390,25 L1330,25 Z"/>
<ellipse cx="1030" cy="960" rx="28" ry="45"/><ellipse cx="1075" cy="1050" rx="25" ry="55"/>
<path d="M1480,740 L1525,730 L1531,790 L1495,800 Z"/>
</g>
<g fill="none" stroke="#707070" stroke-width="5" stroke-linejoin="round">
<path d="M935,0 L960,100 L1000,200 L1010,280 L990,310 L900,330 L830,400 L780,470 L750,560 L739,659 L747,751 L783,832 L831,935 L857,990 L893,1063 L956,1137 L1010,1200 L1060,1300 L1090,1392"/>
<path d="M0,650 L100,680 L400,675 L550,700 L680,715 L730,700"/>
<path d="M990,310 L1080,370 L1150,405 L1250,390 L1350,345 L1420,300 L1531,290"/>
<path d="M730,700 L600,790 L480,880"/>
<path d="M831,935 L860,1027 L893,1165 L890,1260 L820,1392"/>
<path d="M730,700 L760,720 L790,780 L835,850"/>
<path d="M1531,130 L1413,320"/>
<path d="M960,0 L990,100 L1020,220 L1020,290"/>
</g>
<g fill="none" stroke="#f4f4f4" stroke-width="2" stroke-dasharray="8,8" stroke-linejoin="round">
<path d="M935,0 L960,100 L1000,200 L1010,280 L990,310 L900,330 L830,400 L780,470 L750,560 L739,659 L747,751 L783,832 L831,935 L857,990 L893,1063 L956,1137 L1010,1200 L1060,1300 L1090,1392"/>
<path d="M0,650 L100,680 L400,675 L550,700 L680,715 L730,700"/>
<path d="M990,310 L1080,370 L1150,405 L1250,390 L1350,345 L1420,300 L1531,290"/>
<path d="M730,700 L600,790 L480,880"/>
<path d="M831,935 L860,1027 L893,1165 L890,1260 L820,1392"/>
<path d="M730,700 L760,720 L790,780 L835,850"/>
<path d="M1531,130 L1413,320"/>
<path d="M960,0 L990,100 L1020,220 L1020,290"/>
</g>
<g fill="none" stroke="#7a7a7a" stroke-width="2.5">
<path d="M420,270 L450,280 L455,340 L420,380 L430,440 L470,460 L560,470 L620,500 L700,530 L730,555"/>
<path d="M380,595 L540,590 L720,575"/>
<path d="M580,1070 L600,1160 L700,1165 L720,1160"/>
<path d="M720,40 L740,50 L745,150 L800,150 L830,300 L850,470 L860,560"/>
<path d="M900,330 L920,380 L900,460 L870,520"/>
<path d="M1100,360 L1060,460 L1040,560 L990,640 L970,700 L1040,770 L1070,810"/>
<path d="M780,120 L830,100 L840,40 L880,30"/>
<path d="M600,790 L700,800 L780,830 L850,850 L880,900"/>
</g>
<g fill="none" stroke="#ffffff" stroke-width="5" stroke-linejoin="round">
<path d="M0,905 L115,910 L175,940 L260,968 L376,955"/>
<path d="M590,240 L640,390 L680,450 L720,560"/>
<path d="M720,320 L900,290 L980,290"/>
<path d="M0,1176 L106,1147 L176,1123 L314,1079 L505,1150"/>
<path d="M378,960 L347,1038 L314,1109 L264,1209 L235,1256"/>
<path d="M358,1303 L358,1392"/>
<path d="M1110,840 L1155,922 L1196,940 L1224,971 L1248,1015 L1303,1050 L1337,1098 L1368,1136 L1406,1133 L1431,1146 L1500,1188 L1531,1291"/>
<path d="M1000,510 L1060,470 L1130,400 L1160,330"/>
<path d="M1270,300 L1400,270 L1531,290"/>
<path d="M1330,300 L1410,330 L1490,430"/>
<path d="M410,450 L520,520 L600,640"/>
</g>
<g fill="none" stroke-linejoin="round" stroke-linecap="round">
<g stroke="#cbcb8c" stroke-width="9">
<path d="M349,0 L338,88 L335,176 L338,220 L358,235 L361,354 L365,450 L370,600 L375,800 L381,895 L378,955"/>
<path d="M100,245 L210,265 L350,270 L500,255 L600,245 L760,230 L860,195 L920,165 L1000,155"/>
<path d="M0,525 L150,555 L280,570 L380,595"/>
<path d="M378,895 L210,900 L185,920 L165,975 L144,1038 L144,1062 L176,1132 L206,1179 L264,1200 L305,1220 L347,1267 L358,1303"/>
<path d="M378,955 L481,885 L576,900 L700,915"/>
<path d="M590,1000 L700,1000 L820,970 L910,955"/>
<path d="M470,1150 L600,1170 L750,1190 L900,1205 L1020,1210"/>
<path d="M710,720 L715,1160 L690,1300 L670,1392"/>
<path d="M1100,0 L1060,100 L1010,200 L990,270 L950,380 L900,480 L840,600 L800,700 L790,780 L750,790 L640,800 L600,790"/>
<path d="M960,630 L1060,590 L1160,570 L1250,550"/>
<path d="M970,640 L1000,700 L1050,760 L1090,810 L1110,870 L1160,980"/>
<path d="M790,780 L840,830 L880,900 L940,990 L1000,1080 L1060,1180 L1090,1300 L1100,1392"/>
<path d="M830,150 L850,330 L860,470 L850,520"/>
<path d="M380,720 L500,710 L640,700"/>
<path d="M1030,0 L1000,150"/>
</g><g stroke="#f7fabf" stroke-width="6">
<path d="M349,0 L338,88 L335,176 L338,220 L358,235 L361,354 L365,450 L370,600 L375,800 L381,895 L378,955"/>
<path d="M100,245 L210,265 L350,270 L500,255 L600,245 L760,230 L860,195 L920,165 L1000,155"/>
<path d="M0,525 L150,555 L280,570 L380,595"/>
<path d="M378,895 L210,900 L185,920 L165,975 L144,1038 L144,1062 L176,1132 L206,1179 L264,1200 L305,1220 L347,1267 L358,1303"/>
<path d="M378,955 L481,885 L576,900 L700,915"/>
<path d="M590,1000 L700,1000 L820,970 L910,955"/>
<path d="M470,1150 L600,1170 L750,1190 L900,1205 L1020,1210"/>
<path d="M710,720 L715,1160 L690,1300 L670,1392"/>
<path d="M1100,0 L1060,100 L1010,200 L990,270 L950,380 L900,480 L840,600 L800,700 L790,780 L750,790 L640,800 L600,790"/>
<path d="M960,630 L1060,590 L1160,570 L1250,550"/>
<path d="M970,640 L1000,700 L1050,760 L1090,810 L1110,870 L1160,980"/>
<path d="M790,780 L840,830 L880,900 L940,990 L1000,1080 L1060,1180 L1090,1300 L1100,1392"/>
<path d="M830,150 L850,330 L860,470 L850,520"/>
<path d="M380,720 L500,710 L640,700"/>
<path d="M1030,0 L1000,150"/>
</g></g>
<g fill="none" stroke-linejoin="round" stroke-linecap="round">
<path d="M0,240 L90,250 L100,300 L110,370 L140,420 L200,440 L330,450 L480,455 L580,470 L700,460 L760,455 L820,470 L900,480 L980,510 L1040,560 L1100,560 L1200,550 L1300,520 L1420,500 L1531,490" stroke="#d9a86c" stroke-width="10"/>
<path d="M455,0 L490,50 L560,110 L640,150 L800,150" stroke="#d9a86c" stroke-width="10"/>
<path d="M0,240 L90,250 L100,300 L110,370 L140,420 L200,440 L330,450 L480,455 L580,470 L700,460 L760,455 L820,470 L900,480 L980,510 L1040,560 L1100,560 L1200,550 L1300,520 L1420,500 L1531,490" stroke="#fcd6a4" stroke-width="7"/>
<path d="M455,0 L490,50 L560,110 L640,150 L800,150" stroke="#fcd6a4" stroke-width="7"/>
</g>
<path d="M770,0 L765,100 L760,200 L765,300 L770,440 L772,480 L745,560 L700,660 L676,700 L666,760 L626,795 L601,845 L586,895 L601,945 L606,975 L576,1045 L505,1126 L441,1191 L352,1238 L264,1270 L229,1297 L191,1347 L164,1392" fill="none" stroke="#e8957f" stroke-width="10" stroke-linejoin="round"/>
<path d="M770,0 L765,100 L760,200 L765,300 L770,440 L772,480 L745,560 L700,660 L676,700 L666,760 L626,795 L601,845 L586,895 L601,945 L606,975 L576,1045 L505,1126 L441,1191 L352,1238 L264,1270 L229,1297 L191,1347 L164,1392" fill="none" stroke="#f9b29c" stroke-width="7" stroke-linejoin="round"/>
<g fill="none" stroke-linejoin="round">
<path d="M165,0 L160,150 L150,300 L130,420 L100,540 L60,660 L35,800 L30,950 L45,1010 L67,1038 L103,1106 L138,1162 L206,1253 L270,1308 L405,1392" stroke="#d06c82" stroke-width="11"/>
<path d="M0,160 L120,125 L230,100 L420,30 L520,0" stroke="#d06c82" stroke-width="11"/>
<path d="M165,0 L160,150 L150,300 L130,420 L100,540 L60,660 L35,800 L30,950 L45,1010 L67,1038 L103,1106 L138,1162 L206,1253 L270,1308 L405,1392" stroke="#e892a2" stroke-width="8"/>
<path d="M0,160 L120,125 L230,100 L420,30 L520,0" stroke="#e892a2" stroke-width="8"/>
<path d="M130,118 Q150,88 160,90 M170,112 Q175,95 185,110 M128,140 Q150,165 150,175 M182,125 Q165,150 157,170 M132,135 Q160,125 185,120" stroke="#e892a2" stroke-width="5" fill="none"/>
<path d="M140,125 L160,118 L175,120 L160,145 Z" fill="#c8dba9"/>
<ellipse cx="238" cy="1282" rx="22" ry="18" fill="#c5dca8" stroke="#e892a2" stroke-width="4"/>
<ellipse cx="345" cy="1240" rx="16" ry="11" fill="#c5dca8" stroke="#f9b29c" stroke-width="4"/>
</g>
<g fill="none" stroke="#b39bb3" stroke-width="4" stroke-dasharray="16,6,3,6">
<path d="M273,123 L270,220 L279,229 L223,238 L211,305 L250,291 L258,341 L270,438 L165,438 L155,498 L120,695 L90,760 L70,860 L30,1000 L0,1040"/>
<path d="M276,120 L335,135"/>
<path d="M70,0 L73,44 L97,53 L100,62 L62,59 L59,79 L79,82 L82,103 L103,106 L132,109"/>
<path d="M182,38 L226,47 L223,88"/>
<path d="M300,1320 L550,1300 L560,1392"/>
<path d="M1500,560 L1470,700 L1455,850 L1445,946 L1460,1000 L1531,1010"/>
<path d="M1280,0 L1330,90 L1382,106 L1370,140 L1300,140 L1310,240 L1340,250 L1300,320 L1290,340 L1360,370 L1400,440 L1460,490"/>
<path d="M0,1330 L130,1360 L170,1392"/>
</g>
<g font-family="Liberation Sans" font-size="30" fill="#262626" stroke="#fff" stroke-width="6" stroke-linejoin="round" paint-order="stroke">
<text x="600" y="14" textLength="155" lengthAdjust="spacingAndGlyphs">Sulzegrund</text>
<text x="1005" y="58" textLength="195" lengthAdjust="spacingAndGlyphs">Industriehafen</text>
<text x="735" y="86" textLength="147" lengthAdjust="spacingAndGlyphs">Neustädter</text>
<text x="785" y="121" textLength="47" lengthAdjust="spacingAndGlyphs">See</text>
<text x="423" y="140" textLength="233" lengthAdjust="spacingAndGlyphs">Großer Silberberg</text>
<text x="250" y="262" textLength="185" lengthAdjust="spacingAndGlyphs">Alt Olvenstedt</text>
<text x="643" y="268" textLength="147" lengthAdjust="spacingAndGlyphs">Neustädter</text>
<text x="690" y="303" textLength="53" lengthAdjust="spacingAndGlyphs">Feld</text>
<text x="1392" y="273" textLength="105" lengthAdjust="spacingAndGlyphs">Biederitz</text>
<text x="322" y="382" textLength="201" lengthAdjust="spacingAndGlyphs">Neu Olvenstedt</text>
<text x="568" y="377" textLength="125" lengthAdjust="spacingAndGlyphs">Nordwest</text>
<text x="1090" y="377" textLength="152" lengthAdjust="spacingAndGlyphs">Herrenkrug</text>
<text x="843" y="410" textLength="177" lengthAdjust="spacingAndGlyphs">Alte Neustadt</text>
<text x="1450" y="497" textLength="210" lengthAdjust="spacingAndGlyphs">Heyrothsberge</text>
<text x="428" y="533" textLength="188" lengthAdjust="spacingAndGlyphs">Stadtfeld West</text>
<text x="275" y="587" textLength="113" lengthAdjust="spacingAndGlyphs">Diesdorf</text>
<text x="790" y="619" textLength="100" lengthAdjust="spacingAndGlyphs">Altstadt</text>
<text x="1185" y="621" textLength="235" lengthAdjust="spacingAndGlyphs">Berliner Chaussee</text>
<text x="1017" y="719" textLength="90" lengthAdjust="spacingAndGlyphs">Cracau</text>
<text x="600" y="878" textLength="210" lengthAdjust="spacingAndGlyphs">Leipziger Straße</text>
<text x="1097" y="901" textLength="93" lengthAdjust="spacingAndGlyphs">Prester</text>
<text x="482" y="974" textLength="125" lengthAdjust="spacingAndGlyphs">Lemsdorf</text>
<text x="598" y="1030" textLength="94" lengthAdjust="spacingAndGlyphs">Reform</text>
<text x="933" y="1056" textLength="180" lengthAdjust="spacingAndGlyphs">Fermersleben</text>
<text x="313" y="1079" textLength="153" lengthAdjust="spacingAndGlyphs">Ottersleben</text>
<text x="1372" y="1083" textLength="88" lengthAdjust="spacingAndGlyphs">Pechau</text>
<text x="707" y="1096" textLength="181" lengthAdjust="spacingAndGlyphs">Hopfengarten</text>
<text x="1203" y="1155" textLength="144" lengthAdjust="spacingAndGlyphs">Kreuzhorst</text>
<text x="598" y="1205" textLength="162" lengthAdjust="spacingAndGlyphs">Beyendorfer</text>
<text x="638" y="1240" textLength="82" lengthAdjust="spacingAndGlyphs">Grund</text>
<text x="1035" y="1223" textLength="85" lengthAdjust="spacingAndGlyphs">Salbke</text>
<text x="1037" y="1392" textLength="173" lengthAdjust="spacingAndGlyphs">Westerhüsen</text>
<text x="1398" y="1392" textLength="226" lengthAdjust="spacingAndGlyphs">Randau-Calenberge</text>
<text x="752" y="578" font-size="40" textLength="208" lengthAdjust="spacingAndGlyphs">Magdeburg</text>
<text x="1218" y="258" font-style="italic" fill="#5e7a5e" textLength="122" lengthAdjust="spacingAndGlyphs">Biederitzer</text>
<text x="1245" y="290" font-style="italic" fill="#5e7a5e" textLength="65" lengthAdjust="spacingAndGlyphs">Busch</text>
<text x="822" y="749" font-style="italic" fill="#3e9a4a" font-size="27" textLength="153" lengthAdjust="spacingAndGlyphs">Rotehornpark</text>
<text x="0" y="0" font-style="italic" fill="#9a7aa8" font-size="25" transform="translate(1455,712) rotate(-75)" textLength="185" lengthAdjust="spacingAndGlyphs">Jerichower Land</text>
<text x="0" y="0" fill="#c9b3cd" font-size="28" transform="translate(318,1325) rotate(-9)" textLength="135" lengthAdjust="spacingAndGlyphs">Magdeburg</text>
</g>
<g font-family="Liberation Sans" font-size="25" font-style="italic" fill="#a8283c" stroke="#fff" stroke-width="5" paint-order="stroke">
<text x="155" y="40">2</text><text x="146" y="236">2</text><text x="128" y="418">3</text><text x="402" y="30">69</text><text x="218" y="110">68</text><text x="48" y="155">68</text><text x="98" y="1122">4</text><text x="112" y="1146">4</text><text x="198" y="1262">5</text>
</g>
<g fill="#d9834a">
<path d="M30,70 L40,55 L50,70 Z"/>
<path d="M10,475 L20,460 L30,475 Z"/>
<path d="M112,808 L122,793 L132,808 Z"/>
<path d="M94,937 L104,922 L114,937 Z"/>
<path d="M110,1033 L120,1018 L130,1033 Z"/>
<path d="M5,1318 L15,1303 L25,1318 Z"/>
<path d="M912,832 L922,817 L932,832 Z"/>
<path d="M915,1352 L925,1337 L935,1352 Z"/>
</g>
</g></svg>
</div>


<!-- map overlays -->
<div class="a" style="left:39px;top:1308px;width:179px;height:22px;background:rgba(255,255,255,0.82);border-radius:3px"></div>
<svg width="640" height="1340" style="left:0;top:0">
 <path d="M44,1319 H53.5" stroke="#000" stroke-width="1.6"/>
 <path d="M61.5,1319 H195" stroke="#000" stroke-width="3.2" stroke-linecap="round"/>
 <circle cx="140" cy="1319" r="5" fill="#d6d6d6" stroke="#000" stroke-width="2"/>
 <path d="M202.5,1319 H211.5 M207,1314.5 V1323.5" stroke="#000" stroke-width="1.6"/>
</svg>
<div class="a" style="left:430px;top:1310px;width:202px;height:21px;background:rgba(255,255,255,0.82);border-radius:3px"></div>
<div class="t" style="left:446px;top:1309px;font-size:12px;color:#111">©</div>
<div class="t" style="left:462px;top:1309px;font-size:11.8px;color:#0b78d0;text-decoration:underline">OpenStreetMap</div>
<div class="t" style="left:551px;top:1309px;font-size:12.3px;color:#111">contributors</div>

<!-- sidebar panel -->
<div class="a" style="left:1296px;top:186px;width:421px;height:1179px;background:#fff;border:1px solid #e3e3e3;border-radius:8px"></div>


<!-- sidebar header -->
<svg width="1720" height="1400" style="left:0;top:0">
 <rect x="1305.5" y="194.5" width="15" height="13" rx="1" fill="none" stroke="#444" stroke-width="1"/>
 <path d="M1314.5,194.5 V207.5" stroke="#444" stroke-width="1"/>
 <path d="M1316.5,196.8 H1319 M1316.5,198.8 H1319 M1316.5,200.8 H1319" stroke="#3a9fd0" stroke-width="1"/>
 <g stroke="#555" stroke-width="1" fill="none">
  <path d="M1693,197 L1703,207 M1703,197 L1693,207"/>
  <path d="M1691,231.5 L1700.5,241 M1700.5,231.5 L1691,241"/>
  <path d="M1691,517.5 L1700.5,527 M1700.5,517.5 L1691,527"/>
  <path d="M1691,803.5 L1700.5,813 M1700.5,803.5 L1691,813"/>
  <path d="M1691,1089.5 L1700.5,1099 M1700.5,1089.5 L1691,1099"/>
 </g>
 <path d="M1678.5,196.5 L1682.5,200.5 L1680.8,201.2 L1678.8,203.8 L1679.2,205.5 L1673.5,199.8 L1675.2,200.2 L1677.8,198.2 Z M1676,203 L1672.5,206.5" fill="none" stroke="#777" stroke-width="0.9" stroke-linejoin="round"/>
 <g stroke="#d6d6d6" stroke-width="1"><path d="M1308,506.5 H1714 M1308,792.5 H1714 M1308,1078.5 H1714"/><path d="M1387,306.5 H1627" stroke="#e6e6e6"/></g>
 <path d="M1405,284 L1400.5,288.3 L1405,292.6" stroke="#555" fill="none" stroke-width="1"/>
 <path d="M1610,284 L1614.5,288.3 L1610,292.6" stroke="#555" fill="none" stroke-width="1"/>
 <rect x="1441.5" y="365" width="29" height="21.5" fill="#f3f3f3" stroke="#a1224f" stroke-width="1.5"/>
 <rect x="1441" y="436.5" width="30" height="22.5" fill="#cfcfcf"/>
 <rect x="1479.5" y="468.5" width="53" height="23" rx="3" fill="#fff" stroke="#dcdcdc" stroke-width="1"/>
</svg>
<div class="t b" style="left:1329px;top:192px;font-size:11.5px;color:#111">Seitenleiste</div>
<div class="t b" style="left:1307px;top:227px;font-size:11.5px;color:#111">Kalender</div>
<div class="t b" style="left:1307px;top:513px;font-size:11.5px;color:#111">Termine</div>
<div class="t b" style="left:1307px;top:799px;font-size:11.5px;color:#111">Journale</div>
<div class="t b" style="left:1307px;top:1085px;font-size:11.5px;color:#111">Anrufe</div>
<div class="t" style="left:1406px;top:656px;width:200px;text-align:center;color:#a9a9a9">Keine Einträge</div>
<div class="t" style="left:1406px;top:942px;width:200px;text-align:center;color:#a9a9a9">Keine Einträge</div>
<div class="t" style="left:1406px;top:1228px;width:200px;text-align:center;color:#a9a9a9">Keine Einträge</div>
<div class="t b" style="left:1457px;top:277px;width:100px;text-align:center;font-size:14px;color:#1a1a1a">Mai 2025</div>
<div class="t" style="left:1456px;top:471px;width:100px;text-align:center;color:#222">Heute</div>
<div class="t" style="left:1405px;top:313px;width:40px;text-align:center;font-size:12px;color:#222">Mo</div>
<div class="t" style="left:1437px;top:313px;width:40px;text-align:center;font-size:12px;color:#222">Di</div>
<div class="t" style="left:1468px;top:313px;width:40px;text-align:center;font-size:12px;color:#222">Mi</div>
<div class="t" style="left:1499px;top:313px;width:40px;text-align:center;font-size:12px;color:#222">Do</div>
<div class="t" style="left:1530px;top:313px;width:40px;text-align:center;font-size:12px;color:#222">Fr</div>
<div class="t" style="left:1560px;top:313px;width:40px;text-align:center;font-size:12px;color:#222">Sa</div>
<div class="t" style="left:1591px;top:313px;width:40px;text-align:center;font-size:12px;color:#222">So</div>
<div class="t" style="left:1378px;top:342.5px;width:40px;text-align:center;font-size:8.5px;color:#a8a8a8">18</div>
<div class="t" style="left:1405px;top:342.5px;width:40px;text-align:center;font-size:12px;color:#a8a8a8">28</div>
<div class="t" style="left:1437px;top:342.5px;width:40px;text-align:center;font-size:12px;color:#a8a8a8">29</div>
<div class="t" style="left:1468px;top:342.5px;width:40px;text-align:center;font-size:12px;color:#a8a8a8">30</div>
<div class="t" style="left:1499px;top:342.5px;width:40px;text-align:center;font-size:12px;color:#d0101e">1</div>
<div class="t" style="left:1530px;top:342.5px;width:40px;text-align:center;font-size:12px;color:#1a1a1a">2</div>
<div class="t" style="left:1560px;top:342.5px;width:40px;text-align:center;font-size:12px;color:#d0101e">3</div>
<div class="t" style="left:1591px;top:342.5px;width:40px;text-align:center;font-size:12px;color:#d0101e">4</div>
<div class="t" style="left:1378px;top:366.5px;width:40px;text-align:center;font-size:8.5px;color:#a8a8a8">19</div>
<div class="t" style="left:1405px;top:366.5px;width:40px;text-align:center;font-size:12px;color:#1a1a1a">5</div>
<div class="t" style="left:1437px;top:366.5px;width:40px;text-align:center;font-size:12px;color:#1a1a1a">6</div>
<div class="t" style="left:1468px;top:366.5px;width:40px;text-align:center;font-size:12px;color:#1a1a1a">7</div>
<div class="t" style="left:1499px;top:366.5px;width:40px;text-align:center;font-size:12px;color:#1a1a1a">8</div>
<div class="t" style="left:1530px;top:366.5px;width:40px;text-align:center;font-size:12px;color:#1a1a1a">9</div>
<div class="t" style="left:1560px;top:366.5px;width:40px;text-align:center;font-size:12px;color:#d0101e">10</div>
<div class="t" style="left:1591px;top:366.5px;width:40px;text-align:center;font-size:12px;color:#d0101e">11</div>
<div class="t" style="left:1378px;top:390.5px;width:40px;text-align:center;font-size:8.5px;color:#a8a8a8">20</div>
<div class="t" style="left:1405px;top:390.5px;width:40px;text-align:center;font-size:12px;color:#1a1a1a">12</div>
<div class="t" style="left:1437px;top:390.5px;width:40px;text-align:center;font-size:12px;color:#1a1a1a">13</div>
<div class="t" style="left:1468px;top:390.5px;width:40px;text-align:center;font-size:12px;color:#1a1a1a">14</div>
<div class="t" style="left:1499px;top:390.5px;width:40px;text-align:center;font-size:12px;color:#1a1a1a">15</div>
<div class="t" style="left:1530px;top:390.5px;width:40px;text-align:center;font-size:12px;color:#1a1a1a">16</div>
<div class="t" style="left:1560px;top:390.5px;width:40px;text-align:center;font-size:12px;color:#d0101e">17</div>
<div class="t" style="left:1591px;top:390.5px;width:40px;text-align:center;font-size:12px;color:#d0101e">18</div>
<div class="t" style="left:1378px;top:414.5px;width:40px;text-align:center;font-size:8.5px;color:#a8a8a8">21</div>
<div class="t" style="left:1405px;top:414.5px;width:40px;text-align:center;font-size:12px;color:#1a1a1a">19</div>
<div class="t" style="left:1437px;top:414.5px;width:40px;text-align:center;font-size:12px;color:#1a1a1a">20</div>
<div class="t" style="left:1468px;top:414.5px;width:40px;text-align:center;font-size:12px;color:#1a1a1a">21</div>
<div class="t" style="left:1499px;top:414.5px;width:40px;text-align:center;font-size:12px;color:#1a1a1a">22</div>
<div class="t" style="left:1530px;top:414.5px;width:40px;text-align:center;font-size:12px;color:#1a1a1a">23</div>
<div class="t" style="left:1560px;top:414.5px;width:40px;text-align:center;font-size:12px;color:#d0101e">24</div>
<div class="t" style="left:1591px;top:414.5px;width:40px;text-align:center;font-size:12px;color:#d0101e">25</div>
<div class="t" style="left:1378px;top:438.5px;width:40px;text-align:center;font-size:8.5px;color:#a8a8a8">22</div>
<div class="t" style="left:1405px;top:438.5px;width:40px;text-align:center;font-size:12px;color:#1a1a1a">26</div>
<div class="t" style="left:1437px;top:438.5px;width:40px;text-align:center;font-size:12px;color:#1a1a1a">27</div>
<div class="t" style="left:1468px;top:438.5px;width:40px;text-align:center;font-size:12px;color:#1a1a1a">28</div>
<div class="t" style="left:1499px;top:438.5px;width:40px;text-align:center;font-size:12px;color:#d0101e">29</div>
<div class="t" style="left:1530px;top:438.5px;width:40px;text-align:center;font-size:12px;color:#1a1a1a">30</div>
<div class="t" style="left:1560px;top:438.5px;width:40px;text-align:center;font-size:12px;color:#d0101e">31</div>
<div class="t" style="left:1591px;top:438.5px;width:40px;text-align:center;font-size:12px;color:#e49aa6">1</div>

<!-- status bar -->
<div class="a" style="left:1px;top:1366px;width:1718px;height:25px;background:#f1f1f1"></div>
<div class="t" style="left:5px;top:1369px;color:#444;font-size:10.8px">MFAKT</div>
<div class="t" style="left:206px;top:1369px;color:#444;font-size:11px">Test</div>
<div class="t" style="left:357px;top:1369px;color:#444;font-size:11px">25.2.2 Build 1341837</div>

</body></html>
